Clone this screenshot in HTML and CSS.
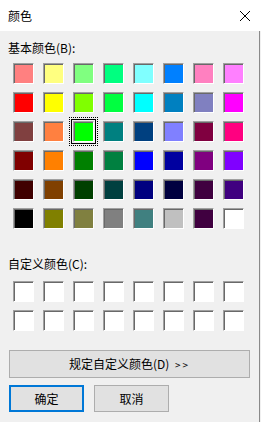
FILE: index.html
```html
<!DOCTYPE html>
<html lang="zh-CN">
<head>
  <meta charset="UTF-8" />
  <meta name="viewport" content="width=device-width, initial-scale=1.0"/>
  <title>颜色</title>
  <link rel="stylesheet" href="styles.css">
</head>
<body>
  <div class="dialog">
    <div class="titlebar">
      <span class="title">颜色</span>
      <svg class="close" width="12" height="12" viewBox="0 0 12 12">
        <path d="M1 1 L11 11 M11 1 L1 11" stroke="#000" stroke-width="1" fill="none"/>
      </svg>
    </div>

    <div class="content">
      <div class="label">基本颜色(B):</div>
      <div class="swatches" id="basicColors"></div>

      <div class="label custom-label">自定义颜色(C):</div>
      <div class="swatches" id="customColors"></div>

      <button class="btn wide">规定自定义颜色(D) <span class="arrows">&gt;&gt;</span></button>
      <div class="actions">
        <button class="btn default">确定</button>
        <button class="btn">取消</button>
      </div>
    </div>
  </div>

  <script>
    const basic = [
      "#FF8080", "#FFFF80", "#80FF80", "#00FF80", "#80FFFF", "#0080FF", "#FF80C0", "#FF80FF",
      "#FF0000", "#FFFF00", "#80FF00", "#00FF40", "#00FFFF", "#0080C0", "#8080C0", "#FF00FF",
      "#804040", "#FF8040", "#00FF00", "#008080", "#004080", "#8080FF", "#800040", "#FF0080",
      "#800000", "#FF8000", "#008000", "#008040", "#0000FF", "#0000A0", "#800080", "#8000FF",
      "#400000", "#804000", "#004000", "#004040", "#000080", "#000040", "#400040", "#400080",
      "#000000", "#808000", "#808040", "#808080", "#408080", "#C0C0C0", "#400040", "#FFFFFF"
    ];

    const basicColors = document.getElementById("basicColors");
    basic.forEach((color, i) => {
      const cell = document.createElement("div");
      cell.className = i === 18 ? "swatch selected" : "swatch";
      cell.style.background = color;
      basicColors.appendChild(cell);
    });

    const customColors = document.getElementById("customColors");
    for (let i = 0; i < 16; i++) {
      const cell = document.createElement("div");
      cell.className = "swatch";
      cell.style.background = "#FFFFFF";
      customColors.appendChild(cell);
    }
  </script>
</body>
</html>
```

FILE: styles.css
```css
body {
  margin: 0;
  font-family: "Noto Sans CJK SC", "Noto Sans", sans-serif;
  font-size: 12px;
  color: #000;
  background: #f0f0f0;
}

.dialog {
  width: 261px;
  height: 422px;
  overflow: hidden;
}

.titlebar {
  height: 31px;
  background: #fff;
  display: flex;
  align-items: center;
  justify-content: space-between;
  padding: 0 10px 0 8px;
}

.title {
  line-height: 14px;
  margin-top: 1px;
}

.close {
  display: block;
  margin-top: 1px;
}

.content {
  border-right: 1px solid #8a8a8a;
  width: 259px;
  height: 391px;
}

.label {
  padding-left: 8px;
  line-height: 14px;
  padding-top: 10px;
  height: 22px;
}

.custom-label {
  padding-top: 28px;
  height: 24px;
}

.swatches {
  display: grid;
  grid-template-columns: repeat(8, 21px);
  grid-auto-rows: 21px;
  column-gap: 9px;
  row-gap: 8px;
  padding-left: 13px;
}

.swatch {
  position: relative;
  box-sizing: border-box;
  border: 1px solid;
  border-color: #a0a0a0 #ffffff #ffffff #a0a0a0;
  box-shadow: inset 1px 1px 0 #696969;
}

.swatch.selected {
  outline: 1px solid #000;
  outline-offset: 1px;
}

.swatch.selected::after {
  content: "";
  position: absolute;
  left: -5px;
  top: -5px;
  right: -5px;
  bottom: -5px;
  border: 1px dotted #000;
}

.btn {
  font-family: "Noto Sans CJK SC", "Noto Sans", sans-serif;
  font-size: 12px;
  color: #000;
  background: #e1e1e1;
  border: 1px solid #adadad;
  padding: 0;
  line-height: 14px;
  box-sizing: border-box;
}

.wide {
  display: block;
  width: 241px;
  height: 28px;
  margin: 19px 0 0 9px;
}

.arrows {
  font-size: 10px;
  letter-spacing: 2px;
  margin-left: 3px;
}

.actions {
  display: flex;
  gap: 10px;
  padding-left: 9px;
  margin-top: 7px;
}

.actions .btn {
  width: 75px;
  height: 27px;
}

.btn.default {
  border: 2px solid #0078d7;
}
```
